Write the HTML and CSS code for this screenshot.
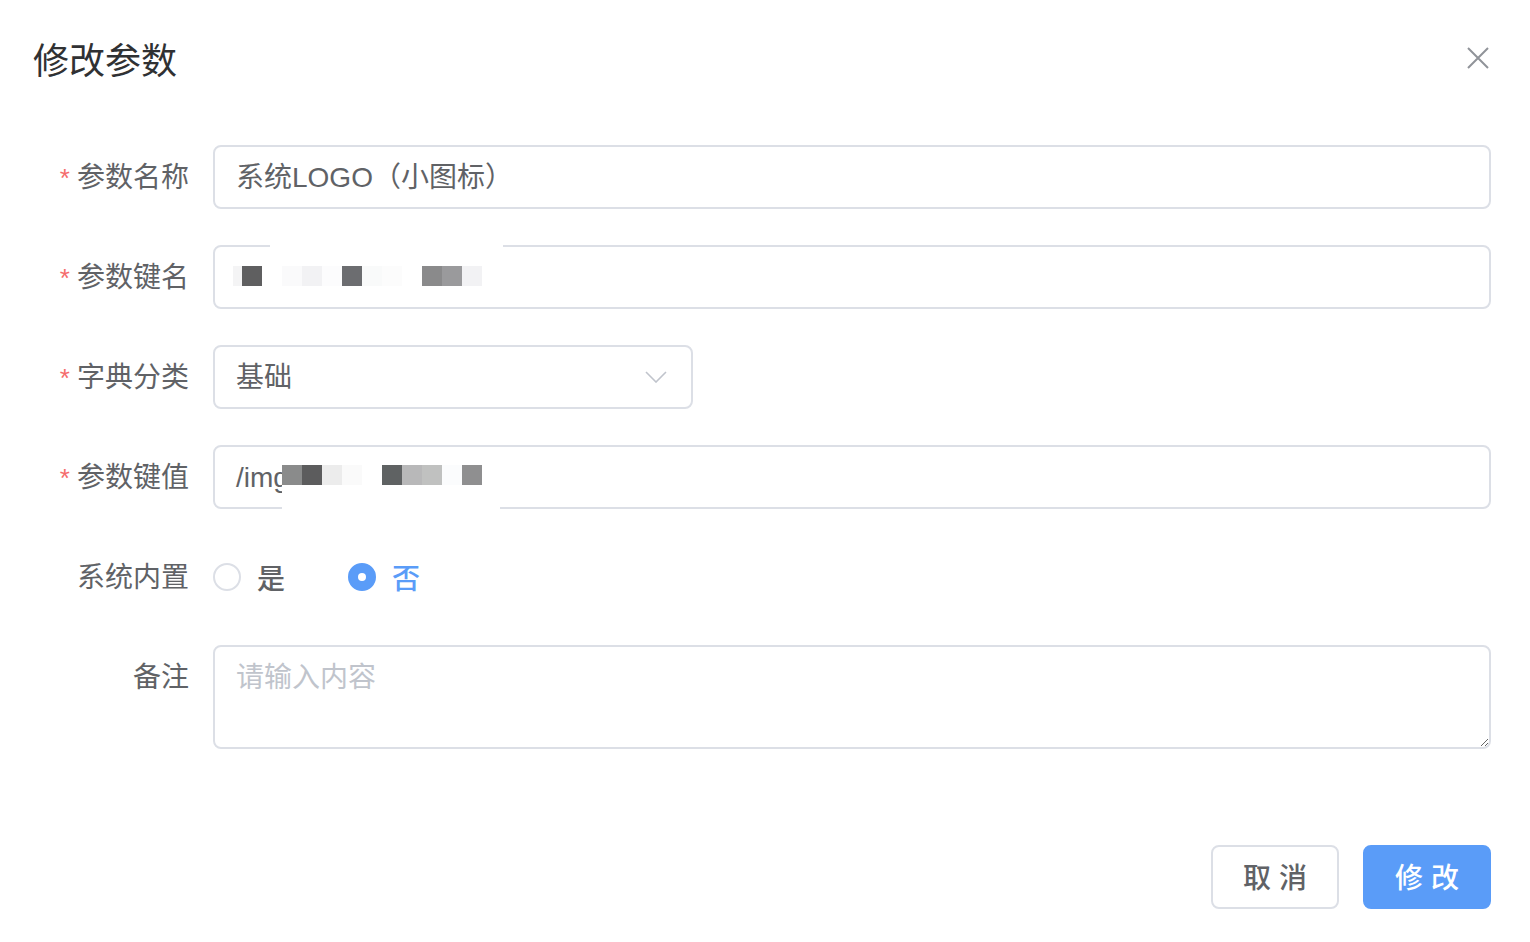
FILE: index.html
```html
<!DOCTYPE html>
<html lang="zh-CN">
<head>
<meta charset="utf-8">
<title>修改参数</title>
<link rel="stylesheet" href="styles.css">
</head>
<body>
<div class="dialog">
  <div class="header">
    <span class="title">修改参数</span>
    <button class="close" aria-label="关闭">
      <svg width="22" height="22" viewBox="0 0 22 22"><path d="M1 1 L21 21 M21 1 L1 21" stroke="#909399" stroke-width="2" fill="none"/></svg>
    </button>
  </div>
  <form class="form">
    <div class="item">
      <label class="label"><span class="req">*</span>参数名称</label>
      <div class="control"><div class="input">系统LOGO（小图标）</div></div>
    </div>
    <div class="item">
      <label class="label"><span class="req">*</span>参数键名</label>
      <div class="control">
        <div class="input"></div>
        <div class="mosaic mosaic-key">
          <i style="background:#f4f4f5;width:9px"></i><i style="background:#5f5f60"></i><i style="background:#fff"></i><i style="background:#fafafb"></i><i style="background:#f2f2f4"></i><i style="background:#fcfcfd"></i><i style="background:#6c6d70"></i><i style="background:#f9fafa"></i><i style="background:#fcfcfc"></i><i style="background:#fff"></i><i style="background:#8a8a8b"></i><i style="background:#9a9a9c"></i><i style="background:#f2f2f4"></i>
        </div>
      </div>
    </div>
    <div class="item">
      <label class="label"><span class="req">*</span>字典分类</label>
      <div class="control">
        <div class="input select">基础
          <svg class="arrow" width="22" height="12" viewBox="0 0 22 12"><path d="M1 1 L11 11 L21 1" stroke="#c0c4cc" stroke-width="1.6" fill="none"/></svg>
        </div>
      </div>
    </div>
    <div class="item">
      <label class="label"><span class="req">*</span>参数键值</label>
      <div class="control">
        <div class="input">/img</div>
        <div class="mosaic mosaic-val">
          <i style="background:#8a8b8b"></i><i style="background:#5c5c5d"></i><i style="background:#ececec"></i><i style="background:#fafafa"></i><i style="background:#fff"></i><i style="background:#5f6263"></i><i style="background:#b8b8b9"></i><i style="background:#c0c1c0"></i><i style="background:#fbfcfd"></i><i style="background:#8f8f90"></i>
        </div>
      </div>
    </div>
    <div class="item">
      <label class="label">系统内置</label>
      <div class="control radios">
        <span class="radio"><span class="dot"></span><span class="rtext">是</span></span>
        <span class="radio checked"><span class="dot"></span><span class="rtext">否</span></span>
      </div>
    </div>
    <div class="item">
      <label class="label">备注</label>
      <div class="control"><textarea class="textarea" placeholder="请输入内容"></textarea></div>
    </div>
  </form>
  <div class="footer">
    <button class="btn">取 消</button>
    <button class="btn primary">修 改</button>
  </div>
</div>
</body>
</html>
```

FILE: styles.css
```css
* { box-sizing: border-box; }
html, body { margin: 0; padding: 0; background: #fff; }
body {
  width: 1530px;
  height: 942px;
  overflow: hidden;
  font-family: "Liberation Sans", "Noto Sans CJK SC", sans-serif;
  color: #606266;
}
.dialog { padding: 0 39px 0 40px; }
.header {
  display: flex;
  justify-content: space-between;
  align-items: center;
  padding-top: 39px;
  height: 84px;
  margin-left: -7px;
}
.title {
  font-size: 36px;
  line-height: 48px;
  color: #303133;
}
.close {
  border: 0;
  background: none;
  padding: 0;
  margin-right: 2px;
  margin-top: -8px;
  width: 22px;
  height: 22px;
  display: flex;
}
.form { padding-top: 61px; }
.item {
  display: flex;
  margin-bottom: 36px;
}
.label {
  width: 173px;
  height: 64px;
  flex: none;
  text-align: right;
  padding-right: 24px;
  padding-top: 2px;
  font-size: 28px;
  line-height: 62px;
  color: #606266;
  white-space: nowrap;
}
.req {
  color: #f56c6c;
  margin-right: 7px;
  font-size: 26px;
}
.control {
  flex: 1;
  position: relative;
}
.input {
  height: 64px;
  border: 2px solid #dcdfe6;
  border-radius: 8px;
  padding: 2px 21px 0;
  font-size: 28px;
  line-height: 58px;
  color: #606266;
}
.select {
  width: 480px;
  position: relative;
}
.arrow {
  position: absolute;
  right: 24px;
  top: 24px;
}
.mosaic {
  position: absolute;
  display: flex;
  align-items: center;
  background: #fff;
}
.mosaic i { display: block; width: 20px; height: 20px; }
.mosaic-key {
  top: 0;
  height: 62px;
  padding-left: 38px;
  left: 20px;
  width: 272px;
  background: transparent;
}
.mosaic-key i:first-child { margin-left: -38px; }
.mosaic-key::before {
  content: "";
  position: absolute;
  left: 37px;
  right: 2px;
  top: 0;
  height: 3px;
  background: #fff;
}
.mosaic-val {
  left: 69px;
  top: 20px;
  height: 44px;
  width: 218px;
  align-items: flex-start;
}
.radios {
  display: flex;
  align-items: center;
  height: 64px;
}
.radio {
  display: inline-flex;
  align-items: center;
  margin-right: 63px;
}
.dot {
  width: 28px;
  height: 28px;
  border: 2px solid #dcdfe6;
  border-radius: 50%;
  position: relative;
}
.rtext {
  font-size: 28px;
  margin-left: 16px;
  color: #606266;
  font-weight: 500;
}
.checked .dot {
  background: #5a9cf8;
  border-color: #5a9cf8;
}
.checked .dot::after {
  content: "";
  position: absolute;
  left: 50%;
  top: 50%;
  width: 8px;
  height: 8px;
  margin: -4px 0 0 -4px;
  background: #fff;
  border-radius: 50%;
}
.checked .rtext { color: #5a9cf8; }
.textarea {
  display: block;
  width: 100%;
  height: 104px;
  border: 2px solid #dcdfe6;
  border-radius: 8px;
  padding: 10px 21px 8px;
  font-family: "Liberation Sans", "Noto Sans CJK SC", sans-serif;
  font-size: 28px;
  line-height: 42px;
  color: #606266;
  resize: vertical;
  outline: none;
}
.textarea::placeholder { color: #c0c4cc; }
.footer {
  display: flex;
  justify-content: flex-end;
  gap: 24px;
  padding-top: 60px;
}
.btn {
  width: 128px;
  height: 64px;
  border: 2px solid #dcdfe6;
  border-radius: 8px;
  background: #fff;
  font-family: "Liberation Sans", "Noto Sans CJK SC", sans-serif;
  font-size: 28px;
  font-weight: 500;
  color: #606266;
  padding: 0 0 3px;
}
.btn.primary {
  background: #5a9cf8;
  border-color: #5a9cf8;
  color: #fff;
}
```
